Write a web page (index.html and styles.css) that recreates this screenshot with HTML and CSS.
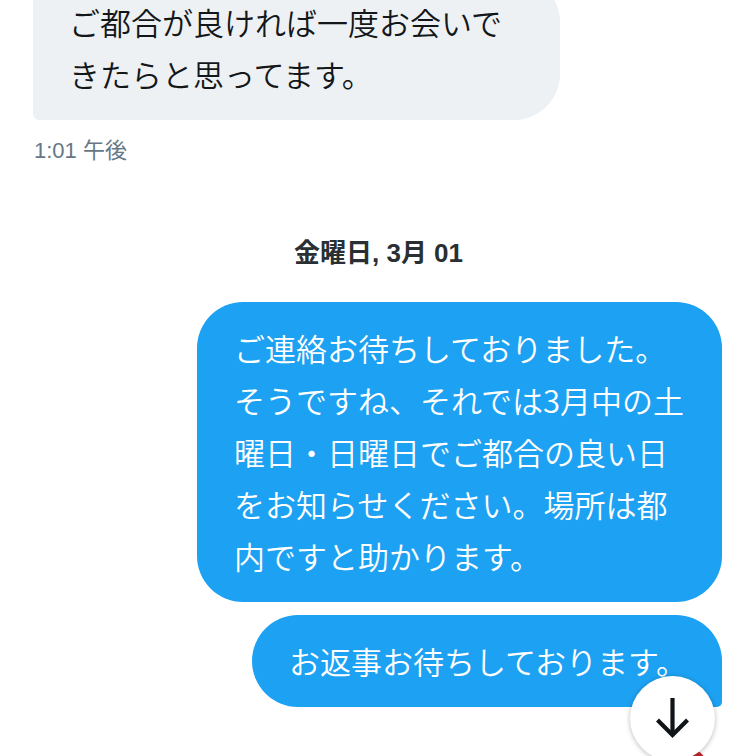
FILE: index.html
```html
<!DOCTYPE html>
<html lang="ja">
<head>
<meta charset="utf-8">
<title>Messages</title>
<link rel="stylesheet" href="styles.css">
</head>
<body>
<main class="thread">
  <div class="msg msg-in">
    <div class="bubble bubble-in">ご都合が良ければ一度お会いできたらと思ってます。</div>
    <div class="time">1:01 午後</div>
  </div>

  <div class="date">金曜日, 3月 01</div>

  <div class="msg msg-out">
    <div class="bubble bubble-out">ご連絡お待ちしておりました。そうですね、それでは3月中の土曜日・日曜日でご都合の良い日をお知らせください。場所は都内ですと助かります。</div>
    <div class="bubble bubble-out bubble-last">お返事お待ちしております。</div>
  </div>
</main>

<span class="badge"></span>
<button class="scroll-down" aria-label="下へスクロール">
  <svg viewBox="0 0 85 85" width="85" height="85" aria-hidden="true">
    <path d="M42.5 22 V58" fill="none" stroke="#0f1419" stroke-width="4.2"/>
    <path d="M27.5 44 L42.5 59 L57.5 44" fill="none" stroke="#0f1419" stroke-width="4.2" stroke-linejoin="miter"/>
  </svg>
</button>
</body>
</html>
```

FILE: styles.css
```css
* { box-sizing: border-box; }

html, body {
  margin: 0;
  padding: 0;
  width: 756px;
  height: 756px;
  overflow: hidden;
  background: #ffffff;
}

body {
  font-family: "Liberation Sans", "Noto Sans CJK JP", sans-serif;
  color: #14171a;
  position: relative;
}

.thread {
  display: flex;
  flex-direction: column;
  padding: 0 34px 0 33px;
  margin-top: -24px;
}

.msg {
  display: flex;
  flex-direction: column;
}

.msg-in { align-items: flex-start; }
.msg-out { align-items: flex-end; gap: 13px; }

.bubble {
  font-family: "Noto Sans CJK JP", sans-serif;
  font-weight: 350;
  font-size: 31px;
  line-height: 52px;
  padding: 20px 36px;
  max-width: 527px;
  border-radius: 46px;
  word-break: normal;
  line-break: strict;
}

.bubble-in {
  background: #eef1f3;
  color: #14171a;
  padding-left: 36px;
  border-bottom-left-radius: 6px;
  border-top-left-radius: 6px;
}

.bubble-out {
  background: #1da1f2;
  color: #ffffff;
  padding: 20px 35px 20px 37px;
  max-width: 525px;
}

.bubble-last {
  border-bottom-right-radius: 5px;
  padding-left: 37px;
}

.time {
  margin-top: 18px;
  font-size: 22px;
  line-height: 26px;
  color: #657786;
  padding-left: 1px;
}

.date {
  margin: 74px 0 34px;
  text-align: center;
  font-weight: 700;
  font-size: 26px;
  line-height: 30px;
  color: #292f33;
  padding-left: 2px;
}

.scroll-down {
  position: absolute;
  left: 630px;
  top: 676px;
  width: 85px;
  height: 85px;
  padding: 0;
  border: none;
  border-radius: 50%;
  background: #ffffff;
  box-shadow: 0 1px 5px rgba(0, 0, 0, 0.28);
  display: flex;
  align-items: center;
  justify-content: center;
}

.scroll-down svg { display: block; }

.badge {
  position: absolute;
  left: 678px;
  top: 750px;
  width: 28px;
  height: 28px;
  border-radius: 50%;
  background: #c4262e;
}
```
